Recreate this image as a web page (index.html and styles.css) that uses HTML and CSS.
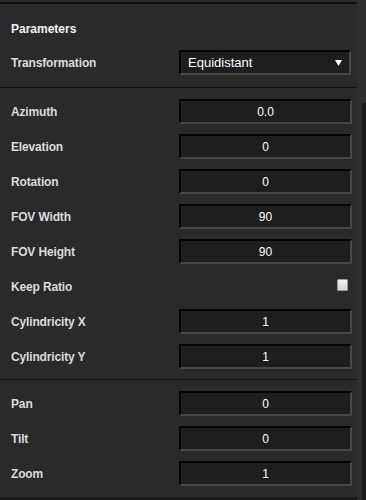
FILE: index.html
```html
<!DOCTYPE html>
<html lang="en">
<head>
    <meta charset="UTF-8">
    <meta name="viewport" content="width=device-width, initial-scale=1.0">
    <title>Parameters</title>
    <link rel="stylesheet" href="styles.css">
</head>
<body>

<div class="window">
    <div class="panel">
        <div class="section section-top">
            <h2 class="heading">Parameters</h2>
            <div class="row">
                <label>Transformation</label>
                <div class="select">
                    <span>Equidistant</span>
                    <svg class="arrow" width="7" height="6" viewBox="0 0 7 6"><path d="M0 0 H7 L3.5 6 Z" fill="#fff"/></svg>
                </div>
            </div>
        </div>

        <div class="section">
            <div class="row"><label>Azimuth</label><input class="field" type="text" value="0.0" readonly></div>
            <div class="row"><label>Elevation</label><input class="field" type="text" value="0" readonly></div>
            <div class="row"><label>Rotation</label><input class="field" type="text" value="0" readonly></div>
            <div class="row"><label>FOV Width</label><input class="field" type="text" value="90" readonly></div>
            <div class="row"><label>FOV Height</label><input class="field" type="text" value="90" readonly></div>
            <div class="row"><label>Keep Ratio</label><span class="check"></span></div>
            <div class="row"><label>Cylindricity X</label><input class="field" type="text" value="1" readonly></div>
            <div class="row"><label>Cylindricity Y</label><input class="field" type="text" value="1" readonly></div>
        </div>

        <div class="section section-last">
            <div class="row"><label>Pan</label><input class="field" type="text" value="0" readonly></div>
            <div class="row"><label>Tilt</label><input class="field" type="text" value="0" readonly></div>
            <div class="row"><label>Zoom</label><input class="field" type="text" value="1" readonly></div>
        </div>
    </div>
    <div class="scrollbar"><div class="thumb"></div></div>
</div>

</body>
</html>
```

FILE: styles.css
```css
body {
    margin: 0;
    background-color: #1a1a1a;
    font-family: "Liberation Sans", Arial, sans-serif;
}
.window {
    display: flex;
    height: 500px;
}
.panel {
    width: 357px;
    height: 497px;
    background-color: #2a2a2a;
    padding-top: 2px;
    box-sizing: border-box;
}
.section {
    border-top: 1px solid #121212;
    padding: 6px 0 5px;
}
.section-top {
    border-top: 2px solid #121212;
    padding: 0 0 7px;
}
.section-last {
    padding: 6px 0 0;
}
.heading {
    margin: 0 0 8px;
    padding: 17px 0 0 11px;
    font-size: 12px;
    line-height: 16px;
    font-weight: bold;
    color: #f2f2f2;
}
.row {
    display: flex;
    align-items: center;
    justify-content: space-between;
    height: 35px;
    padding: 0 5px 0 11px;
}
.row label {
    font-size: 12px;
    font-weight: bold;
    color: #dcdcdc;
    letter-spacing: -0.15px;
}
.field, .select {
    width: 173px;
    height: 25px;
    box-sizing: border-box;
    background-color: #1e1e1e;
    border-style: solid;
    border-width: 2px;
    border-color: #050505 #474747 #474747 #050505;
    color: #fff;
    font-family: "Liberation Sans", Arial, sans-serif;
    font-size: 12px;
    margin: 0;
    padding: 0;
    outline: none;
}
.field {
    text-align: center;
}
.select {
    display: flex;
    align-items: center;
    justify-content: space-between;
    width: 172px;
    height: 25px;
    margin-right: 1px;
    padding: 0 7px 0 7px;
    font-size: 13px;
}
.arrow {
    display: block;
}
.check {
    width: 11px;
    height: 12px;
    margin: 0 4px 3px 0;
    box-sizing: border-box;
    border: 1px solid #9a9a9a;
    border-radius: 1px;
    background: linear-gradient(#f0f0f0, #d4d4d4);
}
.scrollbar {
    position: relative;
    width: 9px;
    height: 500px;
    background-color: #2d2d2d;
}
.thumb {
    position: absolute;
    right: 0;
    top: 103px;
    width: 4px;
    bottom: 0;
    background-color: #1b1b1b;
}
```
